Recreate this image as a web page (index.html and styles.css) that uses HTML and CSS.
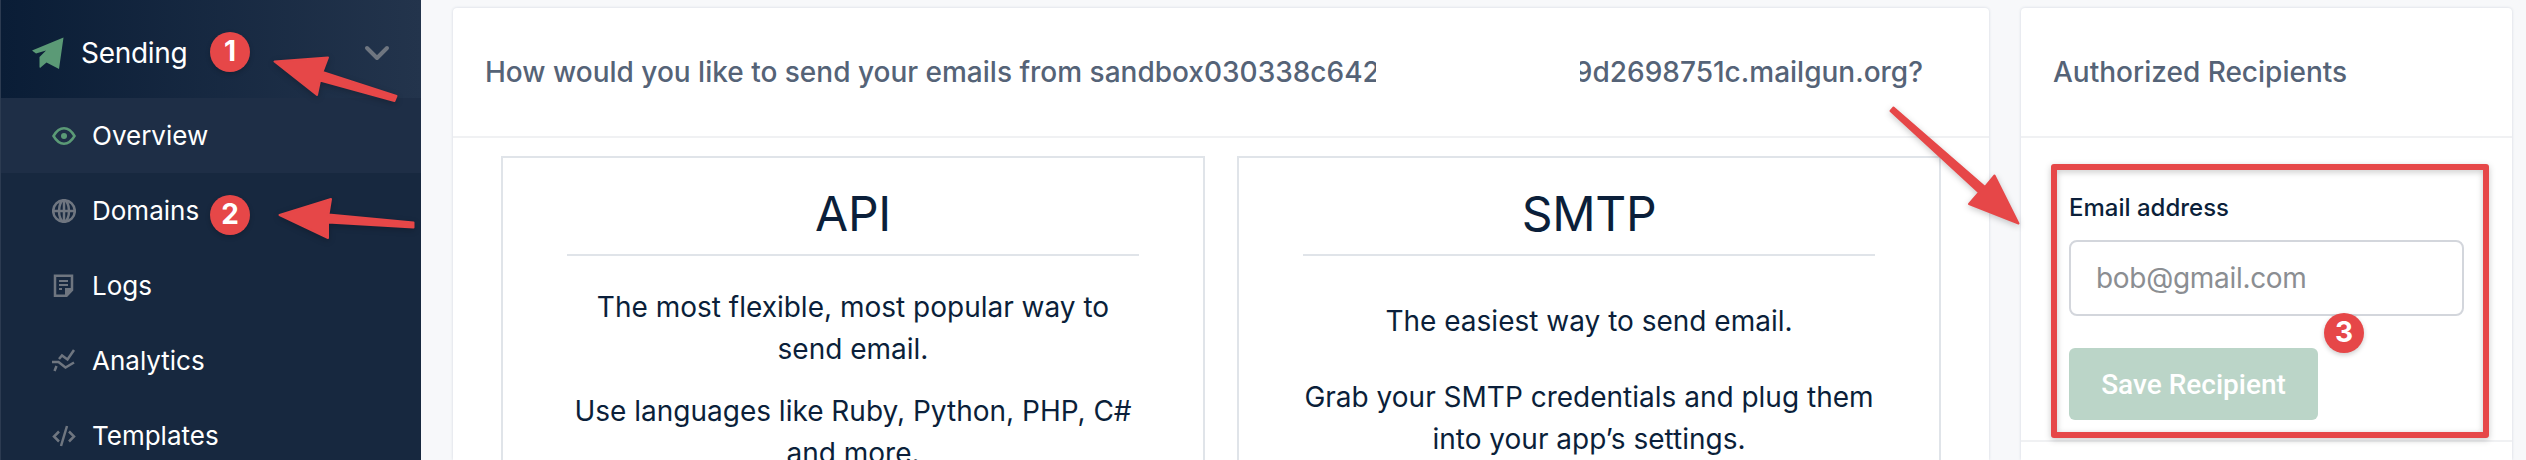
FILE: index.html
```html
<!DOCTYPE html>
<html lang="en">
<head>
<meta charset="utf-8">
<title>Sending overview</title>
<link rel="stylesheet" href="styles.css">
</head>
<body>
<div class="app">
  <nav class="sidebar">
    <div class="nav-head">
      <svg class="plane" viewBox="0 0 32 32"><path d="M31.500.5L27 32 14.500 25.500 8 31 7.500 30V20L14 13.500 4 16.500 0 13.500Z"/></svg>
      <span class="nav-title">Sending</span>
      <svg class="chevron" viewBox="0 0 26 16"><path d="M3 3l10 10L23 3"/></svg>
    </div>
    <a class="nav-item active">
      <svg class="icon" viewBox="0 0 24 24"><path d="M1.500 12Q6 4.300 12 4.300T22.500 12Q18 19.700 12 19.700T1.500 12Z"/><circle cx="12" cy="12" r="3" class="fill"/></svg>
      <span>Overview</span></a>
    <a class="nav-item">
      <svg class="icon" viewBox="0 0 24 24"><circle cx="12" cy="12" r="10.800"/><ellipse cx="12" cy="12" rx="5" ry="10.800"/><path d="M1 12H23M12 1V23"/></svg>
      <span>Domains</span></a>
    <a class="nav-item">
      <svg class="icon" viewBox="0 0 24 24"><path d="M3 1.800H20V16L14.500 21.800H3Z"/><path class="fill" d="M13 14H21V16L15 22.500H13Z"/><path d="M7 7H16M7 11H16M7 15H10" class="thin"/></svg>
      <span>Logs</span></a>
    <a class="nav-item">
      <svg class="icon" viewBox="0 0 24 24"><path d="M0 13H6.500L13.500 18.500L22 13.500M2.500 22L4.500 17M7 10L10 6.500L15.500 10.500L22 1"/></svg>
      <span>Analytics</span></a>
    <a class="nav-item">
      <svg class="icon" viewBox="0 0 24 24"><path d="M7 7.500L2 12.500L7 17.500M17 7.500L22 12.500L17 17.500M15 2L9 22"/></svg>
      <span>Templates</span></a>
  </nav>

  <main class="content">
    <section class="card card-main">
      <header class="card-head split">
        <span class="head-start">How would you like to send your emails from sandbox030338c642</span>
        <span class="head-end">9d2698751c.mailgun.org?</span>
      </header>
      <div class="options">
        <article class="option">
          <h2>API</h2>
          <p>The most flexible, most popular way to<br>send email.</p>
          <p>Use languages like Ruby, Python, PHP, C#<br>and more.</p>
        </article>
        <article class="option smtp">
          <h2>SMTP</h2>
          <p>The easiest way to send email.</p>
          <p>Grab your SMTP credentials and plug them<br>into your app’s settings.</p>
        </article>
      </div>
    </section>
    <section class="card card-side">
      <header class="card-head">Authorized Recipients</header>
      <form class="recipient">
        <label for="email">Email address</label>
        <input id="email" type="text" placeholder="bob@gmail.com">
        <button type="button">Save Recipient</button>
      </form>
    </section>
  </main>
</div>

<svg class="notes" viewBox="0 0 2526 460">
  <rect x="2054" y="167" width="432" height="268"/>
  <path d="M274.500 61.500L328 57.500L322.500 72L396.500 96L394.500 101L320 80.500L317 95Z"/>
  <path d="M279.500 215L331 199L328.500 214.500L413.500 222.500V227.500L328 222.500L328 238Z"/>
  <path d="M1893.500 107.500L1985 187L1994.500 175.500L2018.500 223.500L1969 204L1979 192.500L1890.500 111Z"/>
</svg>
<span class="badge one">1</span>
<span class="badge two">2</span>
<span class="badge three">3</span>
</body>
</html>
```
FILE: styles.css
```css
* { box-sizing: border-box; }
body { margin: 0; width: 2526px; height: 460px; overflow: hidden; background: #f7f8fa; font-family: Inter, "Liberation Sans", sans-serif; color: #0b1f3a; }
.app { display: flex; height: 460px; overflow: hidden; }

.sidebar { width: 421px; flex: none; background: #17283f; border-left: 1px solid #2c3b51; color: #fff; }
.nav-head { height: 98px; padding: 8px 31px 0 31px; display: flex; align-items: center; font-size: 28px; background: linear-gradient(90deg, #0a1d36, #23344c); }
.nav-title { letter-spacing: -.3px; }
.plane { width: 32px; height: 32px; fill: #5b9a76; margin-right: 17px; }
.chevron { width: 26px; height: 16px; margin-left: auto; fill: none; stroke: #6f7680; stroke-width: 4; stroke-linecap: round; stroke-linejoin: round; }
.nav-item { height: 75px; padding-left: 51px; display: flex; align-items: center; gap: 16px; font-size: 26px; }
.nav-item.active { background: #1e2e46; }
.icon { width: 24px; height: 24px; fill: none; stroke: #6f7680; stroke-width: 2.500; color: #6f7680; }
.icon .fill { fill: currentColor; stroke: none; }
.icon .thin { stroke-width: 2; }
.active .icon { stroke: #5b9a76; color: #5b9a76; }

.content { display: flex; gap: 32px; padding: 8px 0 0 32px; }
.card { background: #fff; border-radius: 4px 4px 0 0; box-shadow: 0 0 3px rgba(40, 60, 100, .18); }
.card-main { width: 1536px; }
.card-side { width: 491px; }
.card-head { height: 130px; padding: 0 32px; border-bottom: 2px solid #f0f1f3; line-height: 128px; font-size: 28px; font-weight: 500; color: #556377; white-space: nowrap; }
.split { display: flex; justify-content: space-between; padding-right: 66px; }
.head-start { width: 891px; overflow: hidden; }
.head-end { width: 343px; overflow: hidden; display: flex; justify-content: flex-end; }

.options { display: grid; grid-template-columns: 704px 704px; gap: 32px; padding: 18px 48px 0; }
.option { border: 2px solid #e0e4e9; border-bottom: 0; padding: 0 64px; text-align: center; }
h2 { margin: 0 0 30px; height: 98px; padding-top: 28px; line-height: 56px; font-size: 48px; font-weight: 400; letter-spacing: -.3px; border-bottom: 2px solid #e0e4e9; }
.option p { margin: 0 -20px 20px; font-size: 28px; line-height: 42px; white-space: nowrap; }
.smtp h2 { margin-bottom: 44px; }
.smtp p { margin-bottom: 34px; }

.recipient { height: 304px; padding: 50px 48px 0; border-bottom: 2px solid #f0f1f3; display: flex; flex-direction: column; align-items: flex-start; }
.recipient label { font-size: 24px; font-weight: 500; line-height: 40px; margin-bottom: 12px; }
.recipient input { width: 395px; height: 76px; border: 2px solid #d3d6dc; border-radius: 8px; padding: 0 25px; font: 400 28px Inter, sans-serif; letter-spacing: -.3px; margin-bottom: 32px; }
.recipient input::placeholder { color: #8b8e92; opacity: 1; }
.recipient button { width: 249px; height: 72px; border: 0; border-radius: 6px; background: #bbd5c8; color: #fff; font: 500 28px Roboto, sans-serif; padding: 0; }

.notes { position: absolute; left: 0; top: 0; width: 2526px; height: 460px; fill: #e64748; stroke: #e64748; stroke-width: 2; stroke-linejoin: round; filter: drop-shadow(0 2px 3px rgba(0, 0, 0, .22)); }
.notes rect { fill: none; stroke-width: 6; }
.badge { position: absolute; width: 40px; height: 40px; border-radius: 50%; background: #e64748; color: #fff; font-size: 28px; font-weight: 700; line-height: 39px; text-align: center; box-shadow: 0 2px 5px rgba(0, 0, 0, .2); }
.one { left: 210px; top: 32px; }
.two { left: 210px; top: 195px; }
.three { left: 2324px; top: 313px; }
```
